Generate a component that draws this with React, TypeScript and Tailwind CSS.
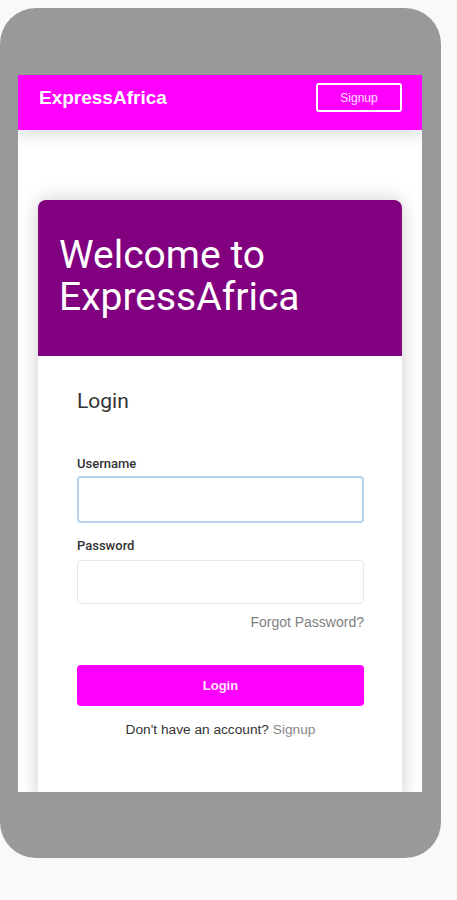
export default function App() {
  return (
    <div className="min-h-[900px] bg-[#f9f9f9] font-['Liberation_Sans',Arial,sans-serif]">
      <div className="pt-2">
        <div className="h-[850px] w-[441px] rounded-[36px] bg-[#999999] pl-[18px] pt-[67px]">
          {/* screen */}
          <div className="h-[717px] w-[404px] overflow-hidden bg-white">
            <nav className="relative z-10 flex h-[55px] items-start justify-between bg-[#ff00ff] pl-[21px] pr-[20px] pt-2 shadow-[0_6px_14px_rgba(0,0,0,0.12)]">
              <span className="mt-[3px] text-[19px] font-bold leading-6 text-white">ExpressAfrica</span>
              <button
                type="button"
                className="flex h-[29px] w-[86px] items-center justify-center rounded-[3px] border-2 border-white text-[12px] text-white/90"
              >
                Signup
              </button>
            </nav>

            <div className="mx-5 mt-[70px] h-[600px] rounded-t-lg bg-white shadow-[0_0_20px_rgba(0,0,0,0.2)]">
              <div className="h-[156px] rounded-t-lg bg-[#800080] pl-[21px] pt-[34px]">
                <h1 className="font-['Roboto',sans-serif] text-[39px] leading-[42px] text-white">
                  Welcome to
                  <br />
                  ExpressAfrica
                </h1>
              </div>

              <div className="pl-[39px] pr-[38px] pt-[31px]">
                <h2 className="font-['Roboto',sans-serif] text-[21px] leading-7 text-[#333]">Login</h2>

                <label className="mt-[41px] block font-['Roboto',sans-serif] text-[13px] font-medium leading-4 text-[#333]">
                  Username
                </label>
                <input
                  type="text"
                  className="mt-1 block h-[47px] w-full rounded-[4px] border-2 border-[#b9d3ea] bg-white px-3 text-sm outline-none"
                />

                <label className="mt-[15px] block font-['Roboto',sans-serif] text-[13px] font-medium leading-4 text-[#333]">
                  Password
                </label>
                <input
                  type="password"
                  className="mt-[6px] block h-[44px] w-full rounded-[4px] border border-[#e6e6e6] bg-white px-3 text-sm outline-none"
                />

                <div className="mt-[9px] text-right text-[14px] leading-[18px] text-[#808080]">Forgot Password?</div>

                <button
                  type="button"
                  className="mt-[34px] flex h-[41px] w-full items-center justify-center rounded-[4px] bg-[#ff00ff] text-[13px] font-bold text-white/90"
                >
                  Login
                </button>

                <p className="mt-[15px] text-center text-[13.7px] leading-[18px] text-[#333]">
                  Don't have an account? <span className="text-[#888]">Signup</span>
                </p>
              </div>
            </div>
          </div>
        </div>
      </div>
    </div>
  );
}
